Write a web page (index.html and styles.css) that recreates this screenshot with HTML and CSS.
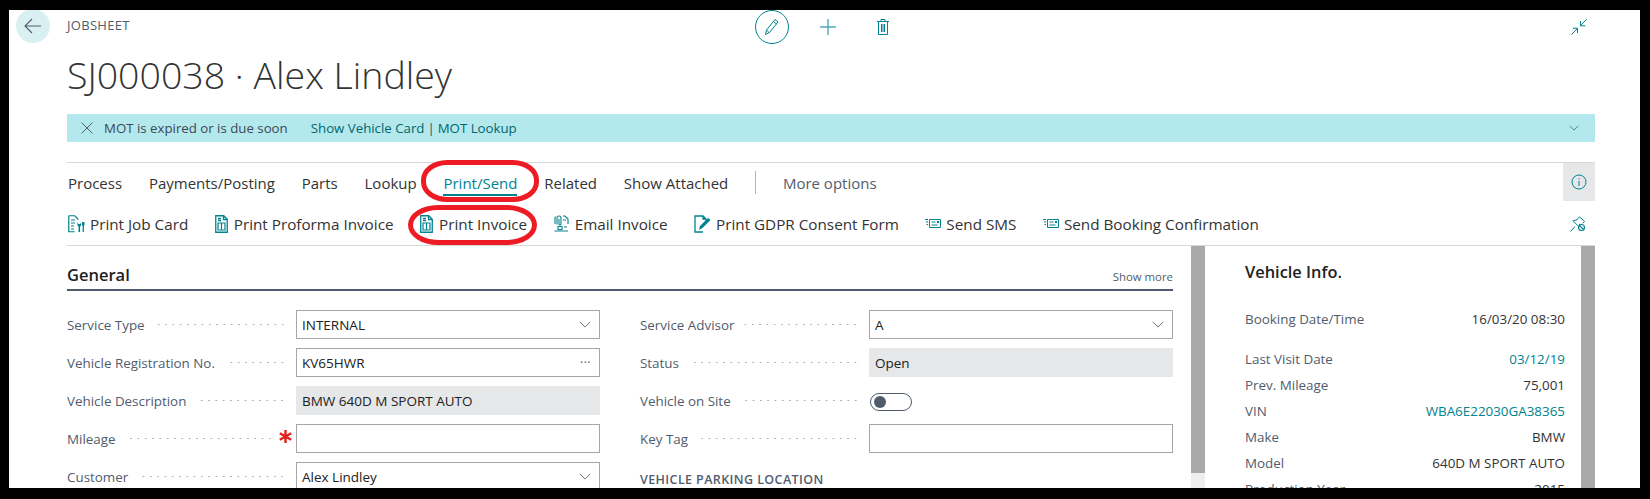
FILE: index.html
```html
<!DOCTYPE html>
<html lang="en">
<head>
  <meta charset="UTF-8" />
  <title>SJ000038 · Alex Lindley</title>
  <link rel="stylesheet" href="styles.css">
</head>
<body>
  <svg class="sprite" width="0" height="0">
    <symbol id="i-doc" viewBox="0 0 13 18">
      <path d="M.75.75h8l3.5 3.5v13h-11.500zM8.500.75v3.750h3.750M3 3.500h3M3 5.500h3" fill="none" stroke="currentColor" stroke-width="1.300"/>
      <path d="M3 8h7v7h-7zM6.500 8v7" fill="none" stroke="currentColor" stroke-width="1.200"/>
    </symbol>
    <symbol id="i-sms" viewBox="0 0 16 9">
      <path d="M4.500.5h11v8h-11zM6.500 3h4M6.500 6h6" fill="none" stroke="currentColor" stroke-width="1"/>
      <path d="M12 2h2v2h-2zM0 0h3v1h-3zM1 2.500h2v1h-2zM1.500 5h1.500v1h-1.500z" fill="currentColor"/>
    </symbol>
    <symbol id="i-chev" viewBox="0 0 14 8">
      <path d="M1 1l6 6 6-6" fill="none" stroke="currentColor" stroke-width="1"/>
    </symbol>
  </svg>

  <div class="panel">
    <div class="topbar">
      <button class="back">
        <svg width="18" height="16" viewBox="0 0 18 16"><path d="M17 8h-16M8 1l-7 7 7 7" fill="none" stroke="#505c6d" stroke-width="1.100"/></svg>
      </button>
      <div class="crumb">JOBSHEET</div>
      <div class="tools">
        <span class="tool tool-edit">
          <svg width="16" height="18" viewBox="0 0 16 18"><path d="M1.500 16.500l1-4.500 8.500-10.500 3 2.500-8.500 10.500zM2.500 12l3 3M9.500 3.500l3 2.500" fill="none" stroke="#00838f" stroke-width="1"/></svg>
        </span>
        <span class="tool">
          <svg width="16" height="16" viewBox="0 0 16 16"><path d="M8 0v16M0 8h16" fill="none" stroke="#4eacb3" stroke-width="1.400"/></svg>
        </span>
        <span class="tool">
          <svg width="14" height="16" viewBox="0 0 14 16"><path d="M1 2.500h12M5 2.500v-2h4v2M2.500 2.500h9v13h-9zM5.500 5v8M7 5v8M8.500 5v8" fill="none" stroke="#00838f" stroke-width="1"/></svg>
        </span>
      </div>
      <div class="collapse">
        <svg width="16" height="16" viewBox="0 0 16 16"><path d="M15.500.500l-6 6M9.500 2v4.800h4.800M.5 15.500l6-6M6.500 14v-4.800h-4.800" fill="none" stroke="#00838f" stroke-width="1"/></svg>
      </div>
    </div>

    <h1 class="title">SJ000038 · Alex Lindley</h1>

    <div class="notice">
      <svg class="notice-x" width="12" height="12" viewBox="0 0 12 12"><path d="M.5.500l11 11M11.500.500l-11 11" fill="none" stroke="#505c6d" stroke-width="1"/></svg>
      <span class="notice-msg">MOT is expired or is due soon</span>
      <a class="notice-link">Show Vehicle Card</a>
      <span class="notice-sep">|</span>
      <a class="notice-link">MOT Lookup</a>
      <svg class="notice-chev" width="10" height="6" viewBox="0 0 14 8"><use href="#i-chev"/></svg>
    </div>

    <div class="tabs">
      <a class="tab">Process</a>
      <a class="tab">Payments/Posting</a>
      <a class="tab">Parts</a>
      <a class="tab">Lookup</a>
      <a class="tab tab-active">Print/Send</a>
      <a class="tab">Related</a>
      <a class="tab">Show Attached</a>
      <span class="tab-divider"></span>
      <a class="tab tab-more">More options</a>
      <span class="info">
        <svg width="16" height="16" viewBox="0 0 16 16"><circle cx="8" cy="8" r="7" fill="none" stroke="#00838f" stroke-width="1"/><path d="M8 7v5M8 4.200v1.300" fill="none" stroke="#00838f" stroke-width="1"/></svg>
      </span>
    </div>

    <div class="actions">
      <a class="action">
        <svg width="17" height="18" viewBox="0 0 17 18"><path d="M.75.750h6l3 3v1M.75.750v16h6M3 5h4M3 8h4M3 11h3M3 14h3" fill="none" stroke="currentColor" stroke-width="1.200"/><path d="M9.500 7v3.500l1 1v5.500h1.600v-5.500l1-1v-3.500l-.9 2h-1.700zM14 7h2.500v3l-.6 1v6h-1.300v-6l-.6-1z" fill="currentColor"/></svg>
        Print Job Card
      </a>
      <a class="action action-doc"><svg width="13" height="18"><use href="#i-doc"/></svg>Print Proforma Invoice</a>
      <a class="action action-doc"><svg width="13" height="18"><use href="#i-doc"/></svg>Print Invoice</a>
      <a class="action action-doc">
        <svg width="15" height="17" viewBox="0 0 15 17"><path d="M3 9.500v-6.500a2 2 0 0 1 4 0v6a1 1 0 0 1-2 0v-5M1 9v-6a3 3 0 0 1 .5-1.500M9 1h2l3 3v5M9 5h3M4 11.500h4v3h-4zM.5 16h13.500M10 12h3" fill="none" stroke="currentColor" stroke-width="1.100"/></svg>
        Email Invoice
      </a>
      <a class="action">
        <svg width="17" height="18" viewBox="0 0 17 18"><path d="M9 17h-8v-16h8l3 3v2M9 1v3h3" fill="none" stroke="currentColor" stroke-width="1.300"/><path d="M5 15l1-4 8-8 2.500 2-8 8z" fill="currentColor"/></svg>
        Print GDPR Consent Form
      </a>
      <a class="action"><svg width="16" height="9"><use href="#i-sms"/></svg>Send SMS</a>
      <a class="action"><svg width="16" height="9"><use href="#i-sms"/></svg>Send Booking Confirmation</a>
      <span class="pin">
        <svg width="16" height="16" viewBox="0 0 16 16"><path d="M.5 15.500l4.500-5M9.500 .8l-2.500 3-4 1 6 6 .8-3M9.500.8l5 4.500-2 2" fill="none" stroke="#00838f" stroke-width="1"/><circle cx="11.500" cy="11.500" r="3" fill="none" stroke="#00838f" stroke-width="1.100"/><path d="M9.500 9.500l4 4" stroke="#00838f" stroke-width="1.100"/></svg>
      </span>
    </div>

    <div class="content">
      <div class="main">
        <div class="section-head">
          <h2>General</h2>
          <a class="show-more">Show more</a>
        </div>
        <div class="columns">
          <div class="col">
            <div class="field">
              <label class="lbl"><span>Service Type</span><i class="dots"></i></label>
              <div class="box">INTERNAL<svg class="chev" width="12" height="7"><use href="#i-chev"/></svg></div>
            </div>
            <div class="field">
              <label class="lbl"><span>Vehicle Registration No.</span><i class="dots"></i></label>
              <div class="box">KV65HWR<span class="ell">···</span></div>
            </div>
            <div class="field">
              <label class="lbl"><span>Vehicle Description</span><i class="dots"></i></label>
              <div class="box box-ro">BMW 640D M SPORT AUTO</div>
            </div>
            <div class="field">
              <label class="lbl"><span>Mileage</span><i class="dots"></i>
                <svg class="star" width="13" height="13" viewBox="0 0 13 13"><path d="M6.500 0v13M.8 3.200l11.400 6.600M12.200 3.200l-11.400 6.600" stroke="#e3201b" stroke-width="2.400"/></svg>
              </label>
              <div class="box"></div>
            </div>
            <div class="field">
              <label class="lbl"><span>Customer</span><i class="dots"></i></label>
              <div class="box">Alex Lindley<svg class="chev" width="12" height="7"><use href="#i-chev"/></svg></div>
            </div>
          </div>
          <div class="col">
            <div class="field">
              <label class="lbl"><span>Service Advisor</span><i class="dots"></i></label>
              <div class="box">A<svg class="chev" width="12" height="7"><use href="#i-chev"/></svg></div>
            </div>
            <div class="field">
              <label class="lbl"><span>Status</span><i class="dots"></i></label>
              <div class="box box-ro">Open</div>
            </div>
            <div class="field">
              <label class="lbl"><span>Vehicle on Site</span><i class="dots"></i></label>
              <div class="toggle-cell"><span class="toggle"><span class="knob"></span></span></div>
            </div>
            <div class="field">
              <label class="lbl"><span>Key Tag</span><i class="dots"></i></label>
              <div class="box"></div>
            </div>
            <div class="group-title">VEHICLE PARKING LOCATION</div>
          </div>
        </div>
      </div>

      <div class="scroll scroll-main"></div>

      <div class="factbox">
        <h3>Vehicle Info.</h3>
        <div class="fact fact-first"><span>Booking Date/Time</span><b>16/03/20 08:30</b></div>
        <div class="fact"><span>Last Visit Date</span><b class="link">03/12/19</b></div>
        <div class="fact"><span>Prev. Mileage</span><b>75,001</b></div>
        <div class="fact"><span>VIN</span><b class="link">WBA6E22030GA38365</b></div>
        <div class="fact"><span>Make</span><b>BMW</b></div>
        <div class="fact"><span>Model</span><b>640D M SPORT AUTO</b></div>
        <div class="fact"><span>Production Year</span><b>2015</b></div>
      </div>

      <div class="scroll"></div>
    </div>

    <span class="mark mark-tab"></span>
    <span class="mark mark-action"></span>
  </div>
</body>
</html>
```

FILE: styles.css
```css
html, body {
  margin: 0;
  height: 100%;
  overflow: hidden;
  background-color: #000;
}
body {
  font-family: "Open Sans", "Liberation Sans", sans-serif;
  font-size: 15px;
  color: #333;
}
.sprite {
  position: absolute;
}
.panel {
  position: relative;
  margin: 10px 10px 0 9px;
  height: 478px;
  padding: 0 45px 0 58px;
  box-sizing: border-box;
  background-color: #fff;
  overflow: hidden;
}

/* top bar */
.topbar {
  position: relative;
  height: 33px;
  display: grid;
  grid-template-columns: 1fr auto 1fr;
  align-items: center;
  margin-left: -51px;
}
.back {
  position: absolute;
  left: 0;
  top: -1px;
  width: 34px;
  height: 34px;
  border: none;
  padding: 0;
  border-radius: 50%;
  background-color: #d8f0f2;
  display: flex;
  align-items: center;
  justify-content: center;
}
.crumb {
  margin: -5px 0 0 51px;
  font-size: 13px;
  letter-spacing: .3px;
  color: #505c6d;
}
.tools {
  display: flex;
  align-items: center;
  gap: 21.500px;
  margin-left: 44px;
}
.tool {
  display: flex;
  align-items: center;
  justify-content: center;
  width: 34px;
  height: 34px;
}
.tool-edit {
  width: 32px;
  height: 32px;
  border: 1px solid #00838f;
  border-radius: 50%;
}
.collapse {
  display: flex;
  justify-content: flex-end;
  padding-right: 8px;
}
.title {
  margin: 0;
  height: 71px;
  font-size: 37.500px;
  line-height: 64px;
  font-weight: 300;
  color: #333;
}

/* notification */
.notice {
  display: flex;
  align-items: center;
  height: 28px;
  padding: 0 16px 0 14px;
  background-color: #b3e9ec;
  font-size: 13.250px;
  color: #3d4755;
}
.notice-x {
  margin-right: 11px;
}
.notice-msg {
  margin-right: 23px;
}
.notice-link {
  color: #00666e;
}
.notice-sep {
  margin: 0 3px;
}
.notice-chev {
  margin-left: auto;
  color: #00666e;
}

/* action bar */
.tabs {
  display: flex;
  align-items: center;
  height: 38px;
  margin-top: 20px;
  border-top: 1px solid #d8d8d8;
  gap: 26.800px;
  padding-left: 1px;
  color: #333;
}
.tab {
  white-space: nowrap;
  height: 38px;
  line-height: 40px;
}
.tab-active {
  color: #00838f;
  position: relative;
}
.tab-active::after {
  content: "";
  position: absolute;
  left: 0;
  right: 0;
  bottom: 5px;
  height: 2px;
  background-color: #00838f;
}
.tab-divider {
  width: 1px;
  height: 23px;
  background-color: #b5b5b5;
}
.tab-more {
  color: #505c6d;
}
.info {
  margin-left: auto;
  width: 32px;
  height: 38px;
  background-color: #e6e7e8;
  display: flex;
  align-items: center;
  justify-content: center;
}
.actions {
  display: flex;
  align-items: center;
  height: 45px;
  padding: 1px 0 0 1px;
  border-bottom: 1px solid #d8d8d8;
  box-sizing: border-box;
  font-size: 15.250px;
  color: #333;
}
.action {
  display: flex;
  align-items: center;
  gap: 5px;
  white-space: nowrap;
  margin-right: 26.500px;
}
.action-doc {
  gap: 6px;
}
.action svg {
  color: #00838f;
}
.pin {
  margin-left: auto;
  padding-right: 9px;
  display: flex;
}

/* body */
.content {
  display: flex;
  height: 242px;
}
.main {
  width: 1106px;
  margin-right: 18px;
}
.section-head {
  display: flex;
  justify-content: space-between;
  align-items: baseline;
  height: 45px;
  box-sizing: border-box;
  border-bottom: 2px solid #505c6d;
  line-height: 58px;
}
.section-head h2 {
  margin: 0;
  font-size: 16.500px;
  font-weight: 600;
  color: #212121;
}
.show-more {
  font-size: 11.400px;
  color: #505c6d;
}
.columns {
  display: grid;
  grid-template-columns: 533px 533px;
  column-gap: 40px;
  padding-top: 19px;
}
.field {
  display: flex;
  height: 38px;
}
.lbl {
  display: flex;
  align-items: center;
  width: 229px;
  height: 29px;
  padding-right: 10px;
  box-sizing: border-box;
  font-size: 13.400px;
  color: #505c6d;
  white-space: nowrap;
}
.dots {
  flex: 1;
  height: 3px;
  margin-left: 10px;
  background-image: radial-gradient(circle, #aab0b8 .7px, transparent 1px);
  background-size: 7.300px 3px;
  background-position: right center;
  background-repeat: repeat-x;
}
.star {
  margin: -5px -6px 0 6px;
  flex: none;
}
.box {
  flex: 1;
  display: flex;
  align-items: center;
  justify-content: space-between;
  height: 29px;
  padding: 0 8px 0 5px;
  box-sizing: border-box;
  border: 1px solid #a6a6a6;
  color: #212121;
  font-size: 13.500px;
}
.box-ro {
  border-color: #e6e7e8;
  background-color: #e6e7e8;
}
.chev {
  color: #505c6d;
}
.ell {
  color: #505c6d;
  font-size: 12px;
  letter-spacing: .5px;
}
.toggle-cell {
  flex: 1;
  padding: 7px 0 0 1px;
}
.toggle {
  display: block;
  width: 42px;
  height: 18px;
  box-sizing: border-box;
  border: 1px solid #505c6d;
  border-radius: 9px;
  padding: 2px 3px;
}
.knob {
  display: block;
  width: 12px;
  height: 12px;
  border-radius: 50%;
  background-color: #505c6d;
}
.group-title {
  margin-top: 9px;
  font-size: 12.500px;
  font-weight: 600;
  letter-spacing: .4px;
  color: #505c6d;
}
.scroll {
  width: 14px;
  flex: none;
  background-color: #a9a9a9;
}
.scroll-main {
  background: linear-gradient(#a9a9a9 227px, #eee 227px);
}
.factbox {
  width: 376px;
  flex: none;
  box-sizing: border-box;
  padding: 0 16px 0 40px;
  overflow: hidden;
  font-size: 13.400px;
}
.factbox h3 {
  margin: 0;
  height: 60px;
  line-height: 52px;
  font-size: 16.400px;
  font-weight: 600;
  color: #212121;
}
.fact {
  display: flex;
  justify-content: space-between;
  height: 26px;
  line-height: 26px;
  color: #505c6d;
}
.fact-first {
  height: 40px;
}
.fact b {
  font-weight: 400;
  color: #333;
}
.fact b.link {
  color: #00838f;
}

/* red hand-drawn marks */
.mark {
  position: absolute;
  box-sizing: border-box;
  border: 5px solid #ed1c24;
}
.mark-tab {
  left: 412px;
  top: 150px;
  width: 118px;
  height: 42px;
  border-radius: 26px / 20px;
}
.mark-action {
  left: 399px;
  top: 195px;
  width: 129px;
  height: 40px;
  border-radius: 30px / 20px;
}
```
